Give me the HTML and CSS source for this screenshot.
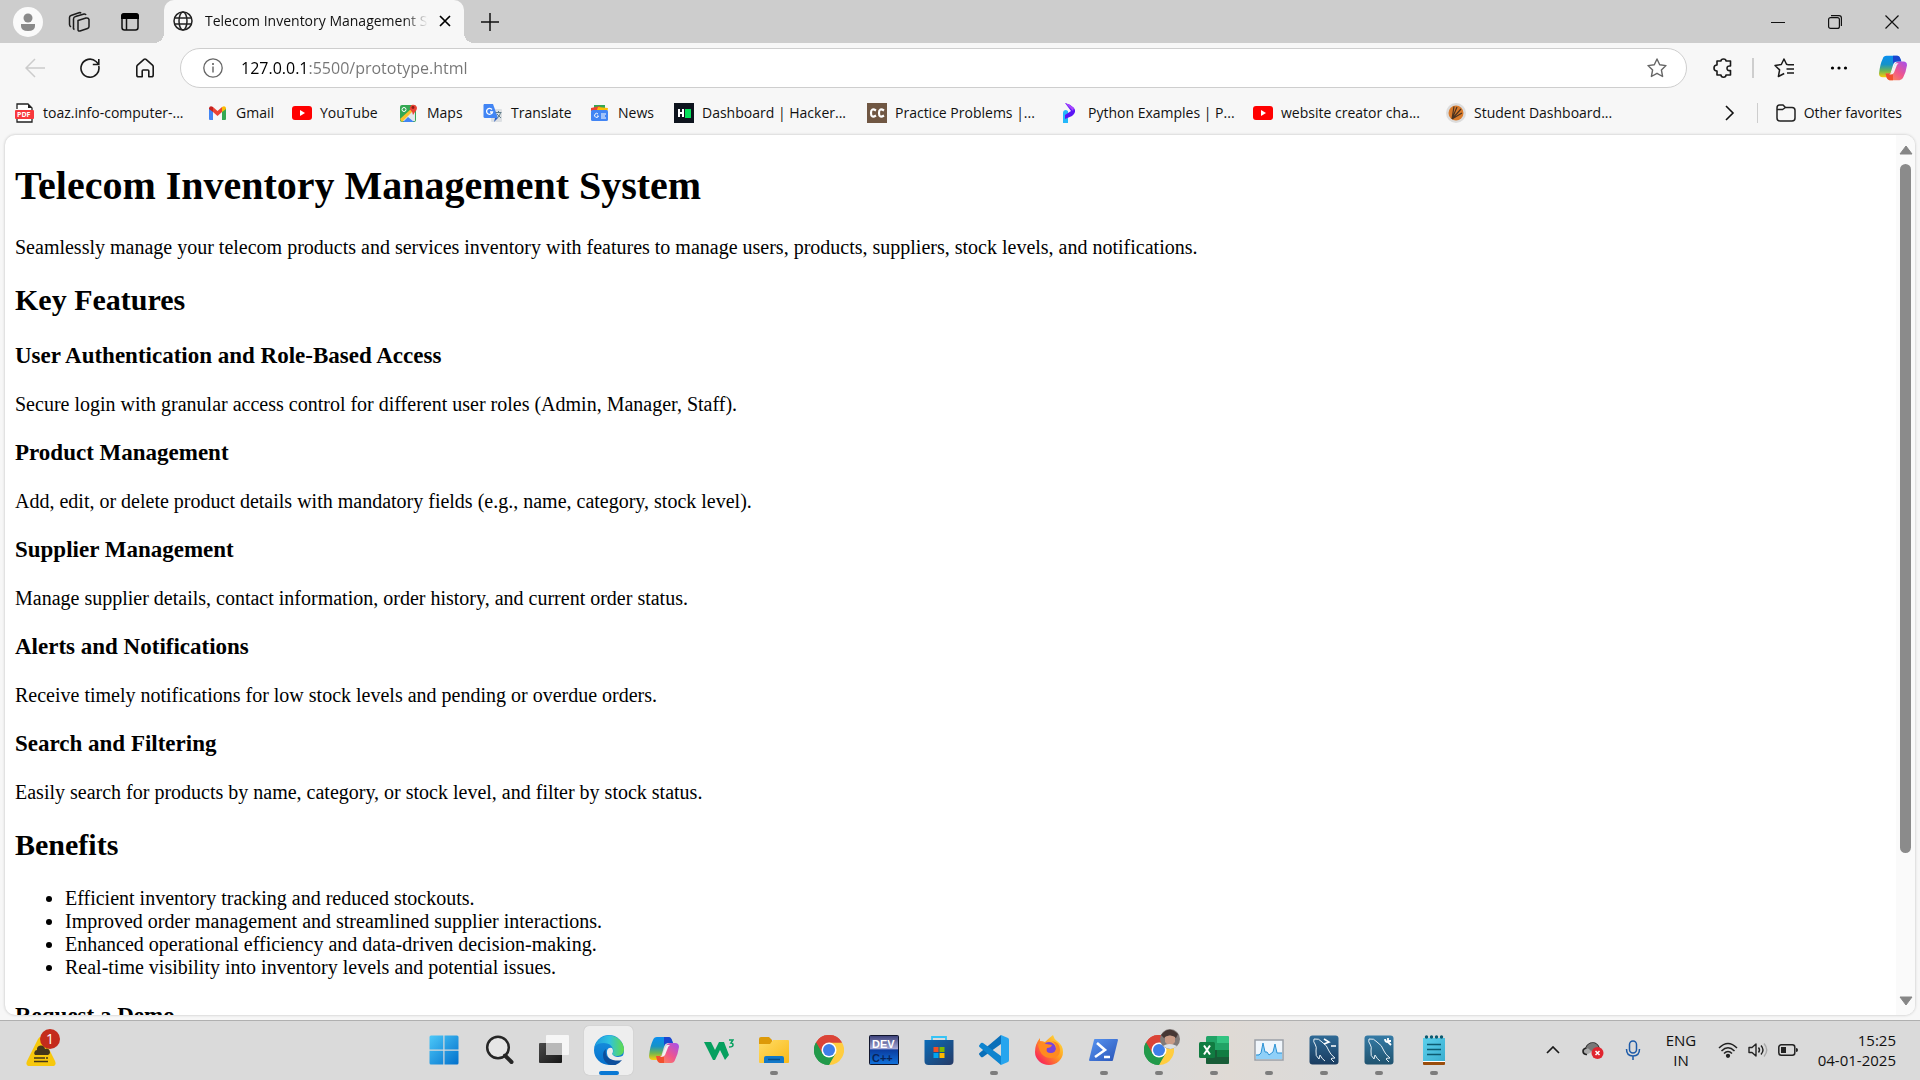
FILE: index.html
```html
<!DOCTYPE html>
<html lang="en">
<head>
<meta charset="utf-8">
<title>Telecom Inventory Management System</title>
<link rel="stylesheet" href="styles.css">
</head>
<body>
<svg class="sprite" aria-hidden="true">
  <defs>
    <linearGradient id="cp-a" x1="0" y1="0" x2="0" y2="1"><stop offset="0" stop-color="#0a8ff0"/><stop offset=".4" stop-color="#1592c8"/><stop offset=".7" stop-color="#6fb551"/><stop offset="1" stop-color="#ffce0a"/></linearGradient>
    <linearGradient id="cp-b" x1="1" y1="0" x2="0" y2="1"><stop offset="0" stop-color="#a24ff0"/><stop offset=".5" stop-color="#f0568c"/><stop offset="1" stop-color="#ff9a4a"/></linearGradient>
    <linearGradient id="win" x1="0" y1="0" x2="1" y2="1"><stop offset="0" stop-color="#4cc8f8"/><stop offset="1" stop-color="#0270cc"/></linearGradient>
    <linearGradient id="edge-a" x1="0" y1="0" x2="1" y2="0"><stop offset="0" stop-color="#1e9be0"/><stop offset=".5" stop-color="#2fc2df"/><stop offset="1" stop-color="#62dc48"/></linearGradient>
    <linearGradient id="edge-b" x1="0" y1="0" x2="0" y2="1"><stop offset="0" stop-color="#1a94e0"/><stop offset="1" stop-color="#0670cc"/></linearGradient>
    <linearGradient id="folder" x1="0" y1="0" x2="1" y2="1"><stop offset="0" stop-color="#ffdc66"/><stop offset="1" stop-color="#f9b917"/></linearGradient>
    <linearGradient id="store" x1="0" y1="0" x2="1" y2="1"><stop offset="0" stop-color="#0a6cb8"/><stop offset="1" stop-color="#263a66"/></linearGradient>
    <linearGradient id="dev" x1="0" y1="0" x2="0" y2="1"><stop offset="0" stop-color="#3a3f78"/><stop offset=".45" stop-color="#a3a6d4"/><stop offset=".5" stop-color="#0a3da0"/><stop offset="1" stop-color="#1173dd"/></linearGradient>
    <linearGradient id="ps" x1="0" y1="0" x2="1" y2="1"><stop offset="0" stop-color="#5795f2"/><stop offset="1" stop-color="#2a55b8"/></linearGradient>
    <linearGradient id="fox" x1="1" y1="0" x2="0" y2="1"><stop offset="0" stop-color="#fff14a"/><stop offset=".45" stop-color="#ff9a1f"/><stop offset=".8" stop-color="#fb3550"/><stop offset="1" stop-color="#e61f75"/></linearGradient>
    <linearGradient id="sql" x1="0" y1="0" x2="0" y2="1"><stop offset="0" stop-color="#2f6a96"/><stop offset="1" stop-color="#1a3c60"/></linearGradient>
    <linearGradient id="bench" x1="0" y1="0" x2="0" y2="1"><stop offset="0" stop-color="#357ba6"/><stop offset="1" stop-color="#20536f"/></linearGradient>
    <linearGradient id="note" x1="0" y1="0" x2="1" y2="1"><stop offset="0" stop-color="#5cd0ec"/><stop offset="1" stop-color="#3aaed0"/></linearGradient>
    <linearGradient id="dark" x1="0" y1="0" x2="1" y2="1"><stop offset="0" stop-color="#4a4a4a"/><stop offset="1" stop-color="#161616"/></linearGradient>
  </defs>
  <symbol id="copilot" viewBox="0 0 30 30">
    <path d="M8 3h11q3 0 4 4l1 2h-5q-3 0-4 4l-3 10q-1 3-5 3H4q-4 0-4-4Q1 12 4 6q1-3 4-3z" fill="url(#cp-a)" transform="translate(0 -1)"/>
    <path d="M15 2h5q2 0 3 3l1 3h-5q-3 0-4 3z" fill="#1b45cf"/>
    <path d="M22 28H12q-3 0-4-4l-1-3h4q3 0 4-4l2-6q1-3 5-3h4q4 0 4 4-1 7-4 13-1 3-4 3z" fill="url(#cp-b)"/>
    <path d="M15 28h-4q-2 0-3-3l-1-4h5q2 0 3-3z" fill="#f2502e"/>
    <path d="M18 10h3q-2 1-3 5l-2 5q-1 2-4 2h-1q2-1 3-4l2-5q1-3 2-3z" fill="#f2f2f2"/>
  </symbol>
  <symbol id="chrome" viewBox="0 0 30 30">
    <path d="M15 15 2 7.500A15 15 0 0 1 28 7.500z" fill="#db4437"/>
    <path d="M15 15 2 7.500A15 15 0 0 0 15 30l6.500-11.200z" fill="#229a4b"/>
    <path d="M15 15h6.500L15 30A15 15 0 0 0 28 7.500H15z" fill="#ffcd40"/>
    <path d="M2 7.500h0A15 15 0 0 1 28 7.500H15L8.500 18.700z" fill="#db4437"/>
    <path d="M2 7.500A15 15 0 0 0 15 30l6.500-11.200L8.500 18.700z" fill="#229a4b"/>
    <circle cx="15" cy="15" r="7.500" fill="#fff"/><circle cx="15" cy="15" r="6" fill="#3f7ee8"/>
  </symbol>
  <symbol id="youtube" viewBox="0 0 20 20"><rect y="3" width="20" height="14" rx="3" fill="#f00"/><path d="M8 7l5 3-5 3z" fill="#fff"/></symbol>
  <symbol id="dolphin" viewBox="0 0 30 30"><g fill="none" stroke="#e7f0f6" stroke-width="1"><path d="M5 4q5-1 8 3 5 3 7 9 1 3 6 7-4 0-4 1l3 3M5 4q-1 3 1 5 2 3 1 7-1 5 3 8l1-4q2 4 5 6"/></g></symbol>
</svg>

<header class="browser">
  <div class="tabs">
    <button class="strip-btn" aria-label="Profile"><svg width="30" height="30" viewBox="0 0 30 30"><circle cx="15" cy="15" r="15" fill="#fafafa"/><circle cx="15" cy="11" r="4.500" fill="#8a8a8a"/><path d="M8 17h14v2q0 5-7 5t-7-5z" fill="#8a8a8a"/></svg></button>
    <button class="strip-btn" aria-label="Workspaces"><svg width="22" height="22" viewBox="0 0 22 22" fill="none" stroke="#1c1c1c" stroke-width="1.500" stroke-linejoin="round"><path d="M10 9.500l8-2.500q2.500-.5 3 1.500v7q0 1.500-1.500 2L12 20q-2 .5-2-1.500zM6.500 18.500Q5 18 5.500 16V8q0-2 2-2.500L16 3q1.500-.3 2 1M3 16q-1.500-1-1.500-2.500V6.500q0-1.500 1.500-2L11 1.800q1.500-.5 2 .5"/></svg></button>
    <button class="strip-btn" aria-label="Tab actions"><svg width="18" height="18" viewBox="0 0 18 18"><rect x="1" y="1" width="16" height="16" rx="2.500" fill="none" stroke="#111" stroke-width="1.500"/><path d="M0 6V3q0-3 3-3h12q3 0 3 3v3z" fill="#000"/><path d="M5.500 6v11" stroke="#111" stroke-width="1.500"/></svg></button>
    <div class="tab">
      <svg width="20" height="20" viewBox="0 0 20 20" fill="none" stroke="#222" stroke-width="1.500"><circle cx="10" cy="10" r="9"/><ellipse cx="10" cy="10" rx="4" ry="9"/><path d="M1.500 7h17M1.500 13h17"/></svg>
      <span class="tab-title">Telecom Inventory Management System</span>
      <button class="tab-close" aria-label="Close tab"><svg width="12" height="12" viewBox="0 0 12 12" stroke="#000" stroke-width="1.700"><path d="M1 1l10 10M11 1L1 11"/></svg></button>
    </div>
    <button class="strip-btn" aria-label="New tab"><svg width="18" height="18" viewBox="0 0 18 18" stroke="#111" stroke-width="1.500"><path d="M9 0v18M0 9h18"/></svg></button>
    <div class="window-controls">
      <button aria-label="Minimize"><svg width="14" height="14" viewBox="0 0 14 14"><path d="M0 7.500h14" stroke="#111"/></svg></button>
      <button aria-label="Restore"><svg width="14" height="14" viewBox="0 0 14 14" fill="none" stroke="#111" stroke-width="1.200"><rect x=".6" y="2.600" width="10.800" height="10.800" rx="2"/><path d="M3 .6h8q2.400 0 2.400 2.400v8"/></svg></button>
      <button aria-label="Close"><svg width="14" height="14" viewBox="0 0 14 14" stroke="#111" stroke-width="1.200"><path d="M.5.500l13 13M13.500.500l-13 13"/></svg></button>
    </div>
  </div>

  <div class="toolbar">
    <button class="tool" aria-label="Back"><svg width="20" height="20" viewBox="0 0 20 20" fill="none" stroke="#ccc" stroke-width="1.500"><path d="M20 10H1M10 1L1 10l9 9"/></svg></button>
    <button class="tool" aria-label="Refresh"><svg width="20" height="20" viewBox="0 0 20 20" fill="none" stroke="#1a1a1a" stroke-width="1.600"><path d="M18.700 8A9 9 0 1 1 16 3.500l2.500 2.500M18.800 1v5.500h-6"/></svg></button>
    <button class="tool" aria-label="Home"><svg width="20" height="20" viewBox="0 0 20 20" fill="none" stroke="#1a1a1a" stroke-width="1.600" stroke-linejoin="round"><path d="M1.800 8.500q0-.8.700-1.400L9 1.300q1-.7 2 0l6.500 5.800q.7.600.7 1.400V17q0 1.800-1.800 1.800h-2.600V13q0-1-1-1H8.200q-1 0-1 1v5.800H3.600Q1.800 18.800 1.800 17z"/></svg></button>
    <div class="address">
      <svg width="20" height="20" viewBox="0 0 20 20"><circle cx="10" cy="10" r="9.200" fill="none" stroke="#666" stroke-width="1.300"/><path d="M10 8.500v6" stroke="#555" stroke-width="1.300"/><circle cx="10" cy="6" r="1" fill="#555"/></svg>
      <input class="url" type="text" aria-label="Address" value="127.0.0.1:5500/prototype.html">
      <button aria-label="Add to favorites"><svg width="20" height="20" viewBox="0 0 20 20" fill="none" stroke="#666" stroke-width="1.400" stroke-linejoin="round"><path d="M10 1l2.700 5.800 6.300.8-4.600 4.400 1.200 6.500-5.600-3.200-5.600 3.200 1.200-6.500L1 7.600l6.300-.8z"/></svg></button>
    </div>
    <button class="tool" aria-label="Extensions"><svg width="20" height="20" viewBox="0 0 20 20" fill="none" stroke="#1a1a1a" stroke-width="1.600" stroke-linejoin="round"><path d="M4 3h4q0-2 2.500-2T13 3h4.500v5q-3.500-.5-3.500 2.300t3.500 2.200V17H13q0 2.200-2.500 2.200T8 17H4v-4Q1 13 1 10t3-3z"/></svg></button>
    <span class="tool-divider"></span>
    <button class="tool" aria-label="Favorites"><svg width="20" height="20" viewBox="0 0 20 20" fill="none" stroke="#1a1a1a" stroke-width="1.500" stroke-linejoin="round"><path d="M14 6.800l-1.500-.5L10 1 7.300 6.500 1 7.500l4.600 4.400-1.200 6.600 5.800-3M14 6.700h6M12.500 11h7.500M13 15h7"/></svg></button>
    <button class="tool" aria-label="Settings and more"><svg width="18" height="4" viewBox="0 0 18 4"><circle cx="2.500" cy="2" r="1.600"/><circle cx="9" cy="2" r="1.600"/><circle cx="15.500" cy="2" r="1.600"/></svg></button>
    <button class="tool" aria-label="Copilot"><svg width="28" height="28"><use href="#copilot"/></svg></button>
  </div>

  <nav class="bookmarks" aria-label="Favorites bar">
    <a class="wide" href="#"><svg width="20" height="20" viewBox="0 0 20 20"><path d="M2 6V1h11l4 4v3M2 13v6h15v-6" fill="#fff" stroke="#222" stroke-width="1.300"/><path d="M13 1v4h4" fill="#222"/><rect x="0" y="7" width="19" height="9" rx="1" fill="#f8383c"/><text x="2" y="14" class="mini-text">PDF</text></svg>toaz.info-computer-...</a>
    <a class="short" href="#"><svg width="20" height="20" viewBox="0 0 20 20"><path d="M1 5v11q0 1 1 1h3V8z" fill="#4285f4"/><path d="M14 8v9h3q1 0 1-1V5z" fill="#34a853"/><path d="M5 4l4.500 4L14 4v5l-4.500 4L5 9z" fill="#ea4335"/><path d="M1 5q1-3 4-1v5L1 6z" fill="#c5221f"/><path d="M18 5q-1-3-4-1v5l4-3z" fill="#fbbc04"/></svg>Gmail</a>
    <a class="medium" href="#"><svg width="20" height="20"><use href="#youtube"/></svg>YouTube</a>
    <a class="short" href="#"><svg width="20" height="20" viewBox="0 0 20 20"><rect x="1" y="2" width="16" height="17" rx="2" fill="#34a853"/><path d="M3 18L16 5v13z" fill="#e3e8ec"/><path d="M1 16L12 6l2 2L3 19z" fill="#fbc02d"/><path d="M4 19l5-5 6 5z" fill="#4285f4"/><path d="M14 12q0-3-3-5.500A3.600 3.600 0 1 1 18 5q0 2-2 4z" fill="#ea4335"/><circle cx="14" cy="4.500" r="1.400" fill="#8c1c13"/><circle cx="5" cy="6.500" r="2" fill="none" stroke="#fff"/></svg>Maps</a>
    <a class="medium" href="#"><svg width="20" height="20" viewBox="0 0 20 20"><rect x="8" y="6" width="11" height="13" rx="1" fill="#dde0e3"/><path d="M1 1h9l5 14H2q-1.500 0-1.500-1.500V2z" fill="#4285f4"/><path d="M12 15h3l-4 4z" fill="#3060c0"/><path d="M9 6.500A3 3 0 1 0 9.500 9H7" fill="none" stroke="#fff" stroke-width="1.300"/><path d="M12.500 9.500h6M15.500 8v1.500M17.500 10q-1 3-3 5M14 11l4 4" fill="none" stroke="#607d8b"/></svg>Translate</a>
    <a class="short" href="#"><svg width="20" height="20" viewBox="0 0 20 20"><path d="M4 2h11v6H4z" fill="#34a853"/><path d="M1 5l9-2 1 5H1z" fill="#ea4335"/><path d="M8 4l10 1-1 5H6z" fill="#fbbc04"/><rect x="1" y="7" width="17" height="11" rx="1.500" fill="#4285f4"/><path d="M8 11a2 2 0 1 0 .5 2H7M11 11h5M11 13h4M11 15h5" fill="none" stroke="#fff"/></svg>News</a>
    <a class="wide" href="#"><svg width="20" height="20" viewBox="0 0 20 20"><path d="M0 0h20v20H0z" fill="#0e141e"/><path d="M5 6v8M9 6v8M5 10h4" stroke="#fff" stroke-width="2"/><path d="M11 6h6v9h-6z" fill="#05e05a"/></svg>Dashboard | Hacker...</a>
    <a class="wide" href="#"><svg width="20" height="20" viewBox="0 0 20 20"><path d="M0 0h20v20H0z" fill="#705743"/><path d="M9 7.500Q4 4.500 4 10t5 2.500M17 7.500q-5-3-5 2.500t5 2.500" fill="none" stroke="#fff" stroke-width="2.200"/></svg>Practice Problems |...</a>
    <a class="wide" href="#"><svg width="20" height="20" viewBox="0 0 20 20"><path d="M3 20V10q0-3 3-3l2 1v12z" fill="#25b8fb"/><path d="M5 0q5 1 9 5 3 4-2 8l-7 3V12l6-4z" fill="#5a15f5"/><path d="M5 0q5 1 9 5l-1 3z" fill="#a845ff"/></svg>Python Examples | P...</a>
    <a class="wide" href="#"><svg width="20" height="20"><use href="#youtube"/></svg>website creator cha...</a>
    <a class="wide" href="#"><svg width="20" height="20" viewBox="0 0 20 20"><circle cx="10" cy="10" r="10" fill="#dcdcdc"/><circle cx="10" cy="10" r="7.500" fill="#d97b2c"/><path d="M6 16L8 3.500M6 16l5-12M6 16l9-10M6 16l10-6" stroke="#4b3320" stroke-width="1.200"/></svg>Student Dashboard...</a>
    <button class="more" aria-label="More favorites"><svg width="10" height="16" viewBox="0 0 10 16" fill="none" stroke="#111" stroke-width="1.600"><path d="M1 1l7 7-7 7"/></svg></button>
    <a class="other" href="#"><svg width="20" height="18" viewBox="0 0 20 18" fill="none" stroke="#222" stroke-width="1.500"><path d="M1 4q0-3 2.500-3H7l2.500 2.500H16q3 0 3 3V14q0 3-3 3H4q-3 0-3-3zM1 5.500h5.500l3-2"/></svg>Other favorites</a>
  </nav>
</header>

<div class="viewport">
  <main class="document">
    <h1>Telecom Inventory Management System</h1>
    <p>Seamlessly manage your telecom products and services inventory with features to manage users, products, suppliers, stock levels, and notifications.</p>
    <h2>Key Features</h2>
    <h3>User Authentication and Role-Based Access</h3>
    <p>Secure login with granular access control for different user roles (Admin, Manager, Staff).</p>
    <h3>Product Management</h3>
    <p>Add, edit, or delete product details with mandatory fields (e.g., name, category, stock level).</p>
    <h3>Supplier Management</h3>
    <p>Manage supplier details, contact information, order history, and current order status.</p>
    <h3>Alerts and Notifications</h3>
    <p>Receive timely notifications for low stock levels and pending or overdue orders.</p>
    <h3>Search and Filtering</h3>
    <p>Easily search for products by name, category, or stock level, and filter by stock status.</p>
    <h2>Benefits</h2>
    <ul>
      <li>Efficient inventory tracking and reduced stockouts.</li>
      <li>Improved order management and streamlined supplier interactions.</li>
      <li>Enhanced operational efficiency and data-driven decision-making.</li>
      <li>Real-time visibility into inventory levels and potential issues.</li>
    </ul>
    <h3>Request a Demo</h3>
  </main>
  <div class="scrollbar">
    <svg width="14" height="10" viewBox="0 0 14 10"><path d="M7 1L13 9H1z" fill="#868686" stroke="#868686" stroke-linejoin="round"/></svg>
    <div class="track"><div class="thumb"></div></div>
    <svg width="14" height="10" viewBox="0 0 14 10"><path d="M7 9L1 1h12z" fill="#868686" stroke="#868686" stroke-linejoin="round"/></svg>
  </div>
</div>

<footer class="taskbar">
  <button class="widgets" aria-label="Widgets">
    <svg width="30" height="30" viewBox="0 0 30 30"><path d="M12 3q3-5 6 0l11 22q2 5-3 5H4q-5 0-3-5z" fill="#f7c80c"/><path d="M9 19a3 3 0 0 1 2-5 4 4 0 0 1 8-1 3 3 0 0 1 3 6z" fill="#43361a"/><path d="M8 22h11M20 22h2M8 25.500h14" stroke="#43361a" stroke-width="1.600"/></svg>
    <span class="badge">1</span>
  </button>
  <div class="apps">
    <button class="app" aria-label="Start"><svg width="30" height="30" viewBox="0 0 30 30"><path d="M2 .5h12.300v14H.5V2Q.5.500 2 .5zM15.500.5H28q1.500 0 1.500 1.500v12.500h-14zM.5 15.700h13.800v13.800H2Q.5 29.500.5 28zM15.500 15.700h14V28q0 1.500-1.500 1.500H15.500z" fill="url(#win)"/></svg></button>
    <button class="app" aria-label="Search"><svg width="30" height="30" viewBox="0 0 30 30" fill="none" stroke="#262626"><circle cx="14" cy="12.500" r="10.800" stroke-width="2.500" fill="#e6e6e6"/><path d="M21 20.500l6.500 6.500" stroke-width="4" stroke-linecap="round"/></svg></button>
    <button class="app" aria-label="Task view"><svg width="30" height="30" viewBox="0 0 30 30"><rect y="8" width="23" height="20" rx="1" fill="url(#dark)"/><rect x="7" y="0" width="23" height="20" rx="1" fill="#f6f6f6"/><path d="M7 8h16v12H8q-1 0-1-1z" fill="#b9b9b9"/></svg></button>
    <button class="app active" aria-label="Edge"><svg width="30" height="30" viewBox="0 0 30 30"><circle cx="15" cy="15" r="15" fill="url(#edge-b)"/><path d="M.5 12A15 15 0 0 1 30 14q0 6-6 7-5 0-6-2 2-2 1-5-2-6-9-6T.5 12z" fill="url(#edge-a)"/><path d="M18 19q2 3 6 3 3 0 6-2v5h-2q-6 3-11 0-5-4-4-9 1-4 5-3 2 3 0 6z" fill="#ececec"/><path d="M28 25q-6 8-14 4-5-3-5-9 0-4 3-6-2 9 7 11 5 1 9 0z" fill="#0d4f9c"/></svg></button>
    <button class="app" aria-label="Copilot"><svg width="30" height="30"><use href="#copilot"/></svg></button>
    <button class="app" aria-label="W3Schools"><svg width="30" height="30" viewBox="0 0 30 30" fill="none" stroke="#06a05f"><path d="M0 7h7l4 8 4-8h5l5 13-4 5-5-10-5 10H9z" fill="#06a05f" stroke="none"/><path d="M25 5h4l-2 3q2 0 2 2t-4 2" stroke-width="1.500"/></svg></button>
    <button class="app running" aria-label="File Explorer"><svg width="30" height="30" viewBox="0 0 30 30"><path d="M0 10V4q0-2 2-2h8l3 3v5z" fill="#dd9a09"/><path d="M0 9h11l3-4h15q1 0 1 1v21q0 1-1 1H1q-1 0-1-1z" fill="url(#folder)"/><path d="M5 28v-5q0-2 2-2h16q2 0 2 2v5z" fill="#1278c8"/><path d="M9 24.500h12" stroke="#0a4d85" stroke-width="1.500"/></svg></button>
    <button class="app" aria-label="Chrome"><svg width="30" height="30"><use href="#chrome"/></svg></button>
    <button class="app" aria-label="Dev-C++"><svg width="30" height="30" viewBox="0 0 30 30"><rect x=".5" y=".5" width="29" height="29" rx="1" fill="url(#dev)" stroke="#10152c"/><text x="3" y="13" class="dev-text">DEV</text><text x="3" y="27" class="cpp-text">C++</text></svg></button>
    <button class="app" aria-label="Microsoft Store"><svg width="30" height="30" viewBox="0 0 30 30"><path d="M8 6V2h14v4" fill="none" stroke="#35c3f5" stroke-width="1.800"/><path d="M.5 5h29v21q0 4-4 4h-21q-4 0-4-4z" fill="url(#store)"/><path d="M9.500 12h5v5h-5z" fill="#f25022"/><path d="M15.500 12h5v5h-5z" fill="#7fba00"/><path d="M9.500 18h5v5h-5z" fill="#00a4ef"/><path d="M15.500 18h5v5h-5z" fill="#ffb900"/></svg></button>
    <button class="app running" aria-label="Visual Studio Code"><svg width="30" height="30" viewBox="0 0 30 30"><path d="M22 0l7 3q1 .5 1 2v20q0 1.500-1 2l-7 3z" fill="#27a5ee"/><path d="M22 0v9L4 22q-1 .5-2 0l-1.500-2q-1-1 0-2z" fill="#0a6fb9"/><path d="M22 30v-9L4 8q-1-.5-2 0L.5 10q-1 1 0 2z" fill="#0e84cf"/></svg></button>
    <button class="app" aria-label="Firefox"><svg width="30" height="30" viewBox="0 0 30 30"><path d="M19 0q1 4 4 6 6 4 6 11a14 13 0 0 1-28 0Q1 9 6 3v3q3 0 5 1 4-4 8-7z" fill="url(#fox)"/><circle cx="15" cy="14" r="7" fill="#7a45d8"/><path d="M4 9q4-3 8 0l6 1q-1 3-5 3-2 5 4 5 4 0 5-4 1-4-4-8 8 1 8 9t-9 8Q6 23 4 9z" fill="#ff8a20"/></svg></button>
    <button class="app running" aria-label="PowerShell"><svg width="30" height="30" viewBox="0 0 30 30"><path d="M6 4h22q1 0 1 1l-5 20q0 1-1 1H1q-1 0-1-1L5 5q0-1 1-1z" fill="url(#ps)"/><path d="M8 8l8 7-10 7M15 22h6" fill="none" stroke="#fff" stroke-width="2.600"/></svg></button>
    <button class="app running" aria-label="Chrome profile"><svg width="42" height="42" viewBox="0 0 42 42"><svg x="6" y="6" width="30" height="30"><use href="#chrome"/></svg><circle cx="32" cy="10" r="10" fill="#817a78"/><path d="M23 6q8-10 17-1l-2 4q-7-5-12 0z" fill="#463734"/><path d="M27 8q5-3 10 0v5q-5 7-10 0z" fill="#c99b86"/><path d="M25 17q6-4 14 0-6 6-14 0z" fill="#dce0e4"/></svg></button>
    <button class="app running" aria-label="Excel"><svg width="30" height="30" viewBox="0 0 30 30"><rect x="7" y="1" width="23" height="28" rx="1.500" fill="#21a366"/><path d="M18 1h10.500Q30 1 30 2.500V8H18z" fill="#33c481"/><path d="M7 15h11v14H8.500Q7 29 7 27.500z" fill="#185c37"/><path d="M18 15h12v7H18z" fill="#107c41"/><path d="M18 22h12v5.500q0 1.500-1.500 1.500H18z" fill="#185c37"/><rect y="7" width="16" height="16" rx="1.500" fill="#107c41"/><path d="M5 10.500l6 9M11 10.500l-6 9" stroke="#fff" stroke-width="2"/></svg></button>
    <button class="app running" aria-label="Performance Monitor"><svg width="30" height="30" viewBox="0 0 30 30"><rect x="1" y="5" width="28" height="20" fill="#f0f6fc" stroke="#9aa0a8" stroke-width="1.500"/><path d="M2 20l3-1 2-1 2-10 2 9h2l2 3 4-3 2-8 2 9h5v6H2z" fill="#8fd0f8"/><path d="M2 20h3l2-2 2-10 2 9h2l2 3 4-3 2-8 2 9h5" fill="none" stroke="#2d92d4"/></svg></button>
    <button class="app running" aria-label="MySQL Command Line"><svg width="30" height="30" viewBox="0 0 30 30"><rect x=".5" y=".5" width="29" height="29" rx="3" fill="url(#sql)"/><use href="#dolphin"/><path d="M15 4l5 3-5 2M22 11h5" fill="none" stroke="#fff" stroke-width="1.600"/></svg></button>
    <button class="app running" aria-label="MySQL Workbench"><svg width="30" height="30" viewBox="0 0 30 30"><rect x=".5" y=".5" width="29" height="29" rx="3" fill="url(#bench)"/><use href="#dolphin"/><path d="M21 4q0 3 3 3l3 3M24 3v3h3" fill="none" stroke="#fff" stroke-width="1.800"/></svg></button>
    <button class="app running" aria-label="Notepad"><svg width="30" height="30" viewBox="0 0 30 30"><path d="M4 27h22v2q0 1-1 1H5q-1 0-1-1z" fill="#9a4d0c"/><path d="M4 3h22v23H4z" fill="url(#note)"/><path d="M4 26h22v1H4z" fill="#fff"/><path d="M8 9.500h14M8 14.500h14M8 19.500h14" stroke="#0d5a70" stroke-width="1.700"/><g fill="#0d5a70"><circle cx="7.500" cy="2" r="1.700"/><circle cx="12.500" cy="2" r="1.700"/><circle cx="17.500" cy="2" r="1.700"/><circle cx="22.500" cy="2" r="1.700"/></g></svg></button>
  </div>
  <div class="tray">
    <button aria-label="Show hidden icons"><svg width="14" height="8" viewBox="0 0 14 8" fill="none" stroke="#1a1a1a" stroke-width="1.700"><path d="M1 7l6-6 6 6"/></svg></button>
    <button aria-label="OneDrive"><svg width="22" height="20" viewBox="0 0 22 20"><path d="M5 14.500H4Q1 14 1 11q0-2 3-3 2-5 7-5 4 0 6 5" fill="#aaa" stroke="#222" stroke-width="1.600"/><path d="M4 8q3 0 5 3l8-3q-2-5-6-5-5 0-7 5z" fill="#777"/><circle cx="15.500" cy="13" r="6" fill="#e0252f"/><path d="M13.500 11l4 4M17.500 11l-4 4" stroke="#fff" stroke-width="1.500"/></svg></button>
    <button aria-label="Microphone"><svg width="16" height="20" viewBox="0 0 16 20" fill="none" stroke="#1c5aa8" stroke-width="1.500"><rect x="4.500" y="1" width="7" height="12" rx="3.500"/><path d="M1.500 9q0 7 6.500 7t6.500-7M8 16v4"/></svg></button>
    <button class="lang">ENG<br>IN</button>
    <button class="quick" aria-label="Network, volume and battery">
      <svg width="20" height="16" viewBox="0 0 20 16" fill="none" stroke="#222" stroke-width="1.500"><path d="M1 6q9-9 18 0M3.500 9q6.500-6.500 13 0M6 11.500q4-4 8 0"/><circle cx="10" cy="13.800" r="1.400" fill="#222"/></svg>
      <svg width="20" height="16" viewBox="0 0 20 16" fill="none" stroke="#222" stroke-width="1.400" stroke-linejoin="round"><path d="M1 5.500h3L8 2v12l-4-3.500H1zM10.500 5.500q2 2.500 0 5M13 3.500q4 4.500 0 9"/><path d="M16 1.500q5.500 6.500 0 13" stroke="#aaa"/></svg>
      <svg width="20" height="14" viewBox="0 0 20 14"><rect x=".8" y="1.800" width="16" height="10.400" rx="2.500" fill="none" stroke="#222" stroke-width="1.500"/><rect x="3" y="4" width="5" height="6" fill="#222"/><path d="M18 5q2 0 2 2t-2 2z" fill="#222"/></svg>
    </button>
    <button class="clock">15:25<br>04-01-2025</button>
  </div>
</footer>
</body>
</html>
```
FILE: styles.css
```css
* { box-sizing: border-box; }

body {
  margin: 0;
  height: 100vh;
  display: flex;
  flex-direction: column;
  overflow: hidden;
  background: #f7f7f7;
  color: #111;
  font: 14px/20px "Open Sans", "Noto Sans", sans-serif;
}

svg { display: block; flex: none; }
.sprite { position: absolute; width: 0; height: 0; }

button {
  display: flex;
  align-items: center;
  justify-content: center;
  flex: none;
  padding: 0;
  border: 0;
  background: none;
  color: inherit;
  font: inherit;
}

a { color: inherit; text-decoration: none; }

/* Tab strip */
.browser { flex: none; }

.tabs {
  display: flex;
  height: 43px;
  padding-left: 2px;
  background: #cdcdcd;
}

.strip-btn { width: 51px; }

.tab {
  position: relative;
  display: flex;
  align-items: center;
  width: 300px;
  margin-left: 9px;
  padding: 0 2px 2px 9px;
  border-radius: 10px 10px 0 0;
  background: #f7f7f7;
}

.tab::before,
.tab::after {
  content: "";
  position: absolute;
  bottom: 0;
  width: 10px;
  height: 10px;
}

.tab::before {
  right: 100%;
  background: radial-gradient(circle at 0 0, #cdcdcd 10px, #f7f7f7 10px);
}

.tab::after {
  left: 100%;
  background: radial-gradient(circle at 100% 0, #cdcdcd 10px, #f7f7f7 10px);
}

.tab-title {
  flex: 1;
  margin-left: 12px;
  overflow: hidden;
  white-space: nowrap;
  -webkit-mask-image: linear-gradient(to left, transparent, #000 24px);
  mask-image: linear-gradient(to left, transparent, #000 24px);
}

.tab-close { width: 34px; height: 32px; }

.window-controls { display: flex; margin-left: auto; }
.window-controls button { width: 57px; }

/* Toolbar */
.toolbar {
  display: flex;
  align-items: center;
  height: 50px;
  padding-left: 7px;
}

.tool { width: 55px; height: 40px; }
.tool:last-child { width: 54px; }

.tool-divider {
  width: 2px;
  height: 20px;
  margin: 0 2px;
  background: #cecece;
}

.address {
  display: flex;
  flex: 1;
  align-items: center;
  height: 40px;
  margin: 0 8px;
  padding: 0 19px 0 22px;
  border: 1px solid #cecece;
  border-radius: 20px;
  background: #fff;
}

.url {
  flex: 1;
  margin-left: 18px;
  padding: 0;
  border: 0;
  outline: 0;
  background: linear-gradient(to right, #000 68px, #757575 68px);
  -webkit-background-clip: text;
  background-clip: text;
  color: transparent;
  font: 16px/24px "Open Sans", "Noto Sans", sans-serif;
}

/* Favorites bar */
.bookmarks {
  display: flex;
  align-items: center;
  height: 42px;
  padding: 0 18px 2px 15px;
  white-space: nowrap;
}

.bookmarks a {
  display: flex;
  align-items: center;
  flex: none;
  gap: 8px;
}

.bookmarks .wide { width: 193px; }
.bookmarks .medium { width: 107px; }
.bookmarks .short { width: 84px; }

.more { width: 40px; margin-left: auto; }

.bookmarks .other {
  height: 20px;
  margin-left: 7px;
  padding-left: 18px;
  border-left: 1px solid #cecece;
}

.mini-text { font: bold 7px "Open Sans", sans-serif; fill: #fff; }

/* Web page */
.viewport {
  display: flex;
  flex: 1;
  min-height: 0;
  margin: 0 5px 5px;
  overflow: hidden;
  border-radius: 10px;
  background: #fff;
  box-shadow: 0 0 3px #bbb;
}

.document {
  flex: 1;
  padding: 0 10px;
  overflow: hidden;
  color: #000;
  font: 20px/23px "Liberation Serif", "Times New Roman", serif;
}

.document h1 { margin: 28px 0 27px; font-size: 40px; line-height: 46px; }
.document h2 { margin: 24px 0 25px; font-size: 30px; line-height: 34px; }
.document h3 { margin: 23px 0 24px; font-size: 23px; line-height: 27px; }
.document p { margin: 20px 0; }
.document ul { margin: 20px 0; padding-left: 50px; }

.scrollbar {
  display: flex;
  flex-direction: column;
  align-items: center;
  width: 19px;
  padding: 10px 0 9px;
  background: #fafafa;
}

.track { flex: 1; width: 11px; padding: 9px 0 12px; }
.thumb { height: 84%; border-radius: 6px; background: #8b8b8b; }

/* Taskbar */
.taskbar {
  display: flex;
  flex: none;
  height: 60px;
  border-top: 1px solid #b0b0b0;
  background: linear-gradient(to right, #dadada 60%, #dfdad5 64%, #dadada 70%);
  font-size: 15px;
}

.widgets {
  position: relative;
  justify-content: flex-start;
  width: 416px;
  padding-left: 26px;
}

.badge {
  position: absolute;
  left: 40px;
  top: 8px;
  width: 20px;
  height: 20px;
  border-radius: 50%;
  background: #c42b1c;
  color: #fff;
  font-size: 14px;
  line-height: 20px;
  text-align: center;
}

.apps { display: flex; align-items: center; padding-bottom: 1px; }

.app {
  position: relative;
  width: 49px;
  height: 49px;
  margin: 0 3px;
  border-radius: 5px;
}

.active { background: #eee; box-shadow: 0 0 1px #aaa; }

.running::after,
.active::after {
  content: "";
  position: absolute;
  bottom: 0;
  width: 8px;
  height: 4px;
  border-radius: 2px;
  background: #7d7d7d;
}

.active::after { width: 20px; background: #0a78d4; }

.dev-text { font: bold 11px "Liberation Sans", sans-serif; fill: #fff; }
.cpp-text { font: bold 11px "Liberation Sans", sans-serif; fill: #082459; }

.tray {
  display: flex;
  align-items: stretch;
  margin-left: auto;
  padding: 0 24px 2px 0;
}

.tray button { width: 40px; }
.tray .lang { width: 56px; text-align: center; }
.tray .quick { width: 98px; gap: 10px; }
.tray .clock { width: 89px; justify-content: flex-end; text-align: right; }
```
